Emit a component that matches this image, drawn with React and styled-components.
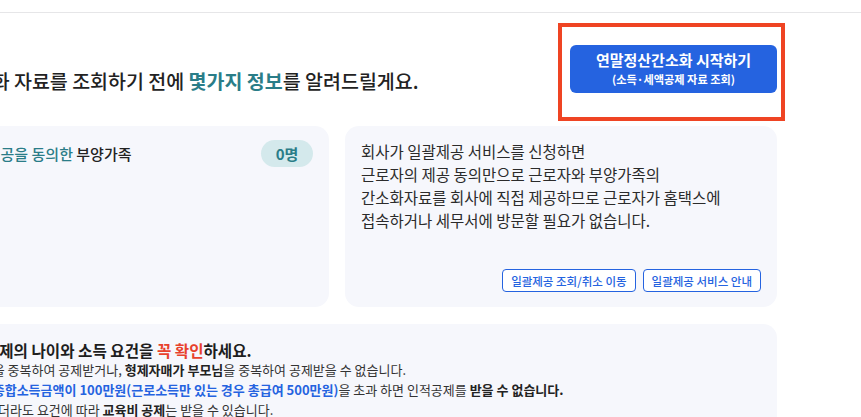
import React from 'react';
import styled, { createGlobalStyle } from 'styled-components';

const GlobalStyle = createGlobalStyle`
  html, body {
    margin: 0;
    padding: 0;
    overflow: hidden;
    background: #ffffff;
  }
  body {
    font-family: "Noto Sans CJK KR", "Noto Sans", sans-serif;
    color: #222222;
  }
  * {
    box-sizing: border-box;
  }
`;

const TopBar = styled.div`
  height: 13px;
  border-bottom: 1px solid #e6e6e8;
`;

const Page = styled.main`
  width: 893px;
  margin-left: -116px;
`;

const IntroRow = styled.div`
  display: flex;
  justify-content: space-between;
  align-items: flex-end;
  padding-top: 32px;
`;

const Heading = styled.h2`
  margin: 0;
  font-size: 19.5px;
  line-height: 24px;
  font-weight: 500;
  color: #222222;
`;

const Teal = styled.span`
  color: #2a7d88;
  font-weight: ${props => (props.$bold ? 700 : 'inherit')};
`;

const StartWrap = styled.div`
  position: relative;

  &::after {
    content: '';
    position: absolute;
    left: -12px;
    right: -8px;
    top: -22px;
    bottom: -28px;
    border: 4px solid #ef4423;
    pointer-events: none;
  }
`;

const StartButton = styled.button`
  width: 207px;
  height: 48px;
  display: flex;
  flex-direction: column;
  align-items: center;
  justify-content: center;
  border: none;
  border-radius: 6px;
  background: #2563e0;
  color: #ffffff;
  font-family: inherit;
  font-weight: 700;
  cursor: pointer;
  padding: 0;
`;

const StartMain = styled.span`
  font-size: 15px;
  line-height: 20px;
`;

const StartSub = styled.span`
  font-size: 11.2px;
  line-height: 18px;
`;

const CardGrid = styled.div`
  display: grid;
  grid-template-columns: 1fr 432px;
  gap: 16px;
  margin-top: 33px;
`;

const Card = styled.section`
  background: #f6f7fc;
  border-radius: 14px;
  min-height: 181px;
  padding: 14px 16px 15px ${props => props.$inset || 16}px;
  display: flex;
  flex-direction: column;
`;

const CardHead = styled.div`
  display: flex;
  justify-content: space-between;
  align-items: center;
`;

const CardTitle = styled.h3`
  margin: 0;
  font-size: 15px;
  line-height: 22px;
  font-weight: 500;
  color: #222222;
`;

const CountBadge = styled.span`
  display: inline-flex;
  align-items: center;
  justify-content: center;
  width: 52px;
  height: 27px;
  border-radius: 14px;
  background: #d4e9ec;
  color: #2a7d88;
  font-size: 15px;
  font-weight: 700;
`;

const CardText = styled.p`
  margin: 0;
  font-size: 15.5px;
  line-height: 23px;
  color: #2b2b2b;
`;

const LinkRow = styled.div`
  margin-top: auto;
  display: flex;
  justify-content: flex-end;
  gap: 7px;
`;

const LinkButton = styled.button`
  height: 23px;
  padding: 0 8px;
  border: 1px solid #2563e0;
  border-radius: 4px;
  background: #ffffff;
  color: #2563e0;
  font-family: inherit;
  font-size: 11.5px;
  font-weight: 500;
  cursor: pointer;
`;

const NoticeCard = styled.section`
  margin-top: 17px;
  background: #f6f7fc;
  border-radius: 14px;
  padding: 16px 40px 24px;
`;

const NoticeTitle = styled.h3`
  margin: 0;
  font-size: 15.6px;
  line-height: 20px;
  font-weight: 700;
  color: #1e1e1e;
`;

const Red = styled.span`
  color: #e8412c;
`;

const NoticeList = styled.ul`
  list-style: none;
  margin: 0;
  padding: 0;
`;

const NoticeItem = styled.li`
  font-size: 13px;
  line-height: 20px;
  color: #333333;

  &::before {
    content: '·';
    display: inline-block;
    width: 6px;
  }
`;

const Strong = styled.b`
  font-weight: 700;
  color: ${props => (props.$blue ? '#2563e0' : '#222222')};
`;

export default function App() {
  return (
    <>
      <GlobalStyle />
      <TopBar />
      <Page>
        <IntroRow>
          <Heading>
            연말정산간소화 자료를 조회하기 전에 <Teal $bold>몇가지 정보</Teal>를 알려드릴게요.
          </Heading>
          <StartWrap>
            <StartButton type="button">
              <StartMain>연말정산간소화 시작하기</StartMain>
              <StartSub>(소득·세액공제 자료 조회)</StartSub>
            </StartButton>
          </StartWrap>
        </IntroRow>

        <CardGrid>
          <Card $inset={27}>
            <CardHead>
              <CardTitle>
                <Teal>간소화 자료 제공을 동의한</Teal> 부양가족
              </CardTitle>
              <CountBadge>0명</CountBadge>
            </CardHead>
          </Card>

          <Card>
            <CardText>
              회사가 일괄제공 서비스를 신청하면
              <br />
              근로자의 제공 동의만으로 근로자와 부양가족의
              <br />
              간소화자료를 회사에 직접 제공하므로 근로자가 홈택스에
              <br />
              접속하거나 세무서에 방문할 필요가 없습니다.
            </CardText>
            <LinkRow>
              <LinkButton type="button">일괄제공 조회/취소 이동</LinkButton>
              <LinkButton type="button">일괄제공 서비스 안내</LinkButton>
            </LinkRow>
          </Card>
        </CardGrid>

        <NoticeCard>
          <NoticeTitle>
            부양가족 공제의 나이와 소득 요건을 <Red>꼭 확인</Red>하세요.
          </NoticeTitle>
          <NoticeList>
            <NoticeItem>
              한 부양가족을 중복하여 공제받거나, <Strong>형제자매가 부모님</Strong>을 중복하여 공제받을 수 없습니다.
            </NoticeItem>
            <NoticeItem>
              부양가족의 <Strong $blue>종합소득금액이 100만원(근로소득만 있는 경우 총급여 500만원)</Strong>을 초과 하면 인적공제를 <Strong>받을 수 없습니다.</Strong>
            </NoticeItem>
            <NoticeItem>
              만 20세가 넘더라도 요건에 따라 <Strong>교육비 공제</Strong>는 받을 수 있습니다.
            </NoticeItem>
          </NoticeList>
        </NoticeCard>
      </Page>
    </>
  );
}
